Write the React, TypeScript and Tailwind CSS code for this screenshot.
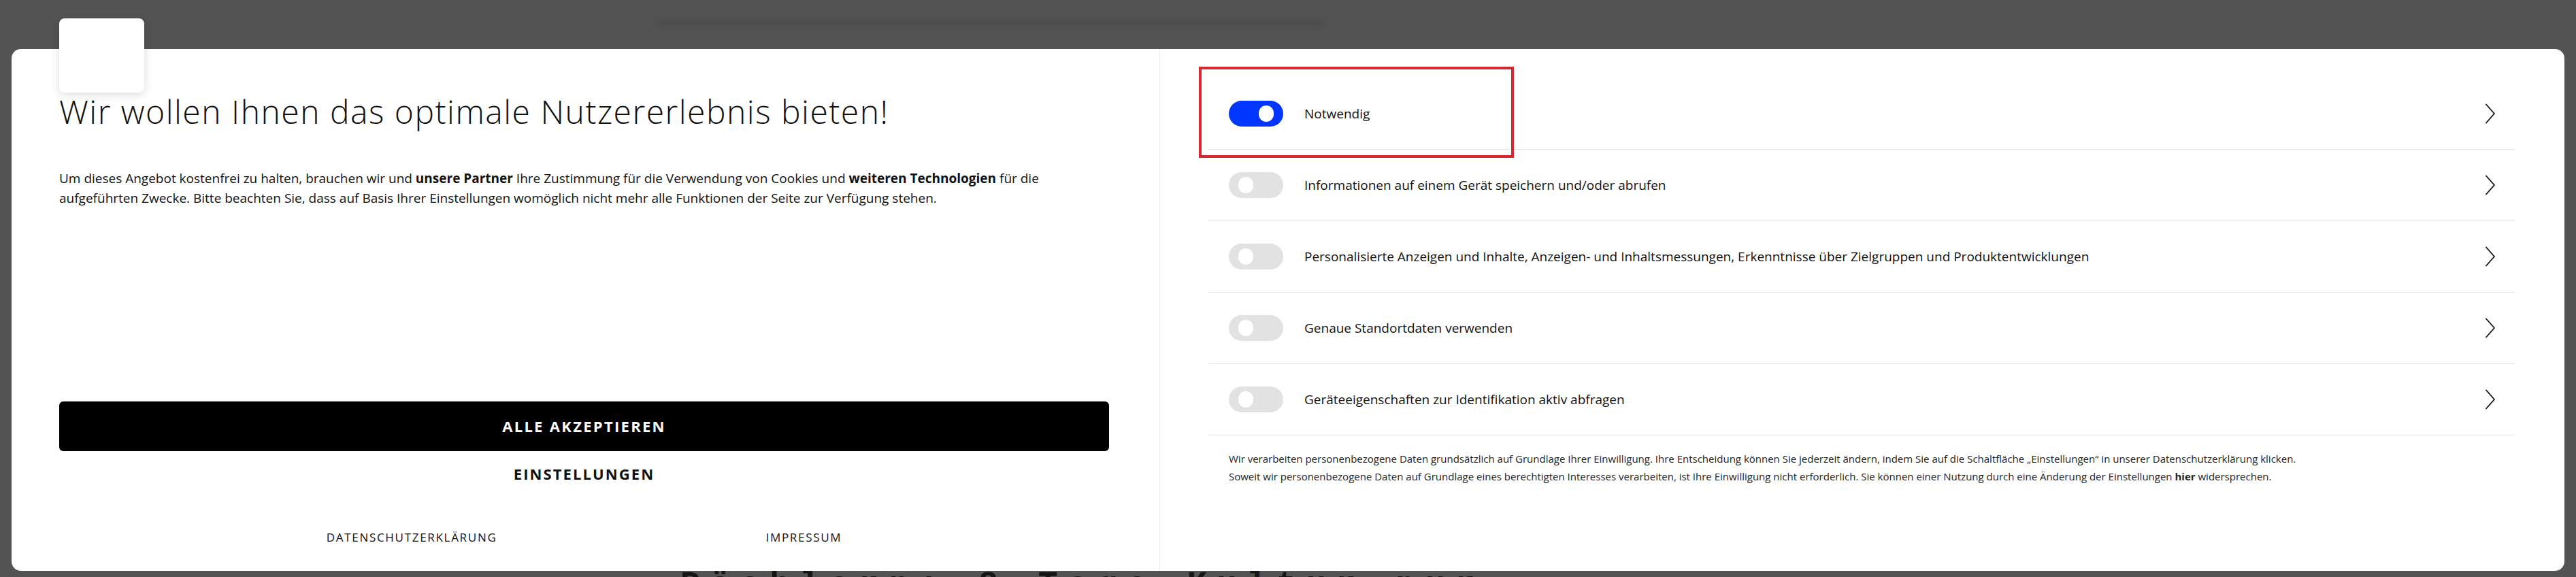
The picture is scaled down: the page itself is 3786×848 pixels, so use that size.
import React from "react";

const Chevron = () => (
  <svg width="16" height="30" viewBox="0 0 16 30" fill="none" className="shrink-0">
    <polyline points="2,1.5 14,15 2,28.5" stroke="#111" strokeWidth="1.8" strokeLinecap="round" strokeLinejoin="round" />
  </svg>
);

const Toggle = ({ on }: { on: boolean }) => (
  <div
    className={
      on
        ? "w-[80px] h-[38px] rounded-full bg-[#0036ff] flex items-center justify-end pr-[14px] shrink-0"
        : "w-[80px] h-[38px] rounded-full bg-[#e2e2e2] flex items-center justify-start pl-[14px] shrink-0"
    }
  >
    <div className="w-[22px] h-[24px] rounded-full bg-white" />
  </div>
);

const rows = [
  { label: "Notwendig", on: true },
  { label: "Informationen auf einem Gerät speichern und/oder abrufen", on: false },
  {
    label:
      "Personalisierte Anzeigen und Inhalte, Anzeigen- und Inhaltsmessungen, Erkenntnisse über Zielgruppen und Produktentwicklungen",
    on: false,
  },
  { label: "Genaue Standortdaten verwenden", on: false },
  { label: "Geräteeigenschaften zur Identifikation aktiv abfragen", on: false },
];

export default function App() {
  return (
    <div
      className="relative w-[3786px] h-[848px] bg-[#535353] overflow-hidden text-[#111]"
      style={{ fontFamily: '"Open Sans", "Noto Sans", sans-serif' }}
    >
      {/* background page hints behind the overlay */}
      <div className="absolute left-[966px] top-[30px] w-[980px] h-[8px] bg-[#444] blur-[5px] opacity-60" />
      <div
        className="absolute left-[1000px] top-[836px] text-[48px] font-bold tracking-[15px] text-[#151515] whitespace-nowrap leading-none"
        style={{ fontFamily: '"Liberation Mono", monospace' }}
      >
        Pöchlarn: 8 Tage Kultur pur
      </div>

      <div className="relative z-10 mt-[72px] ml-[17px] w-[3752px] h-[767px] rounded-[14px] bg-white flex">
        {/* left column */}
        <div className="w-[1688px] shrink-0 border-r border-[#e9e9e9] pl-[70px] pr-[74px] flex flex-col">
          <div className="-mt-[45px] w-[125px] h-[109px] rounded-[8px] bg-white shadow-[0_3px_14px_rgba(0,0,0,0.14)]" />
          <h1 className="mt-0 text-[48px] leading-[56px] font-light tracking-[1.5px] text-[#111] whitespace-nowrap">
            Wir wollen Ihnen das optimale Nutzererlebnis bieten!
          </h1>
          <p className="mt-[56px] text-[19px] leading-[29px] text-[#111]">
            <span className="whitespace-nowrap">
              Um dieses Angebot kostenfrei zu halten, brauchen wir und <b className="font-bold">unsere Partner</b> Ihre
              Zustimmung für die Verwendung von Cookies und <b className="font-bold">weiteren Technologien</b> für die
            </span>
            <br />
            <span className="whitespace-nowrap">
              aufgeführten Zwecke. Bitte beachten Sie, dass auf Basis Ihrer Einstellungen womöglich nicht mehr alle
              Funktionen der Seite zur Verfügung stehen.
            </span>
          </p>
          <button className="mt-[284px] h-[73px] w-full rounded-[6px] bg-black text-white text-[22px] font-bold tracking-[2.3px] flex items-center justify-center">
            ALLE AKZEPTIEREN
          </button>
          <button className="mt-[13px] h-[40px] w-full text-[22px] font-bold tracking-[2.1px] text-[#111] flex items-center justify-center">
            EINSTELLUNGEN
          </button>
          <div className="mt-[61px] flex justify-center gap-[395px] text-[17px] tracking-[1.7px] text-[#111]">
            <span>DATENSCHUTZERKLÄRUNG</span>
            <span>IMPRESSUM</span>
          </div>
        </div>

        {/* right column */}
        <div className="relative flex-1 pl-[71px] pr-[73px] pt-[43px]">
          <div className="flex flex-col">
            {rows.map((r) => (
              <div
                key={r.label}
                className="h-[105px] border-b border-[#e6e6e6] flex items-center pl-[30px] pr-[28px]"
              >
                <Toggle on={r.on} />
                <span className="ml-[31px] text-[19px] text-[#111] flex-1 whitespace-nowrap">{r.label}</span>
                <Chevron />
              </div>
            ))}
          </div>
          <p className="mt-[21px] pl-[30px] text-[15px] leading-[26px] text-[#222]">
            <span className="whitespace-nowrap">
              Wir verarbeiten personenbezogene Daten grundsätzlich auf Grundlage Ihrer Einwilligung. Ihre Entscheidung
              können Sie jederzeit ändern, indem Sie auf die Schaltfläche „Einstellungen“ in unserer Datenschutzerklärung
              klicken.
            </span>
            <br />
            <span className="whitespace-nowrap">
              Soweit wir personenbezogene Daten auf Grundlage eines berechtigten Interesses verarbeiten, ist Ihre
              Einwilligung nicht erforderlich. Sie können einer Nutzung durch eine Änderung der Einstellungen{" "}
              <b className="font-bold">hier</b> widersprechen.
            </span>
          </p>

          {/* annotation box */}
          <div className="absolute left-[57px] top-[26px] w-[463px] h-[134px] border-[4px] border-[#d62a30]" />
        </div>
      </div>
    </div>
  );
}
